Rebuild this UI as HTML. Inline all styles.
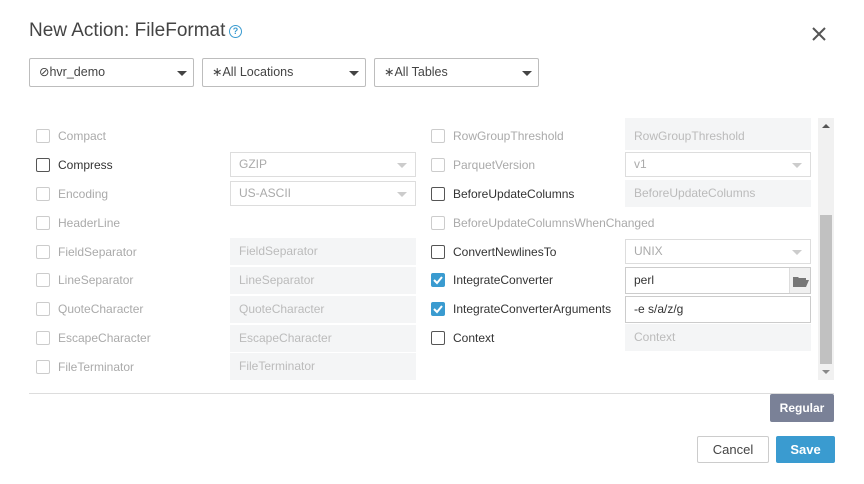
<!DOCTYPE html>
<html><head><meta charset="utf-8"><style>
*{box-sizing:border-box;margin:0;padding:0}
body{width:864px;height:484px;background:#fff;font-family:"Liberation Sans",sans-serif;position:relative;overflow:hidden;color:#333}
.a{position:absolute}
.title{left:29px;top:20px;font-size:19px;color:#444}
.help{left:229px;top:25px;width:13px;height:13px;border:1.5px solid #3a9bd0;border-radius:50%;color:#3a9bd0;font-size:9px;font-weight:bold;text-align:center;line-height:10px}
.dd{top:58px;height:29px;border:1px solid #bdbdbd;border-radius:2px;font-size:12.5px;line-height:27px;padding-left:9px;color:#444}
.dd:after{content:"";position:absolute;right:6px;top:12px;border-left:5px solid transparent;border-right:5px solid transparent;border-top:5px solid #444}
.cb{width:14px;height:14px;border:1px solid #ccc;border-radius:2px}
.cb.on{border-color:#555}
.cb.ck{background:#3a9bd0;border-color:#3a9bd0}
.lb{font-size:12px;color:#aaa}
.lb.on{color:#333}
.in{height:27px;background:#f4f5f6;font-size:12px;color:#bbb;padding-left:9px;line-height:27px}
.sel{height:25px;border:1px solid #ddd;font-size:12px;color:#aaa;padding-left:8px;line-height:23px}
.sel:after{content:"";position:absolute;right:8px;top:10px;border-left:5px solid transparent;border-right:5px solid transparent;border-top:5px solid #ccc}
.ti{height:27px;border:1px solid #ccc;font-size:12px;color:#333;padding-left:8px;line-height:25px;background:#fff}
.btn{font-size:13px;text-align:center;border-radius:2px}
</style></head><body>
<div class="a title">New Action: FileFormat</div>
<div class="a help">?</div>
<svg class="a" style="left:811px;top:26px" width="16" height="16"><path d="M2 2L14 14M14 2L2 14" stroke="#555" stroke-width="2"/></svg>
<div class="a dd" style="left:29px;width:165px">⊘hvr_demo</div>
<div class="a dd" style="left:202px;width:164px">∗All Locations</div>
<div class="a dd" style="left:374px;width:165px">∗All Tables</div>

<div class="a cb" style="left:36px;top:129px"></div><div class="a lb" style="left:58px;top:129px">Compact</div>
<div class="a cb on" style="left:36px;top:158px"></div><div class="a lb on" style="left:58px;top:158px">Compress</div>
<div class="a sel" style="left:230px;top:152px;width:186px">GZIP</div>
<div class="a cb" style="left:36px;top:187px"></div><div class="a lb" style="left:58px;top:187px">Encoding</div>
<div class="a sel" style="left:230px;top:181px;width:186px">US-ASCII</div>
<div class="a cb" style="left:36px;top:216px"></div><div class="a lb" style="left:58px;top:216px">HeaderLine</div>
<div class="a cb" style="left:36px;top:245px"></div><div class="a lb" style="left:58px;top:245px">FieldSeparator</div>
<div class="a in" style="left:230px;top:238px;width:186px">FieldSeparator</div>
<div class="a cb" style="left:36px;top:273px"></div><div class="a lb" style="left:58px;top:273px">LineSeparator</div>
<div class="a in" style="left:230px;top:267px;width:186px">LineSeparator</div>
<div class="a cb" style="left:36px;top:302px"></div><div class="a lb" style="left:58px;top:302px">QuoteCharacter</div>
<div class="a in" style="left:230px;top:296px;width:186px">QuoteCharacter</div>
<div class="a cb" style="left:36px;top:331px"></div><div class="a lb" style="left:58px;top:331px">EscapeCharacter</div>
<div class="a in" style="left:230px;top:325px;width:186px">EscapeCharacter</div>
<div class="a cb" style="left:36px;top:360px"></div><div class="a lb" style="left:58px;top:360px">FileTerminator</div>
<div class="a in" style="left:230px;top:353px;width:186px">FileTerminator</div>

<div class="a in" style="left:625px;top:118px;width:186px;height:5px"></div>
<div class="a cb" style="left:431px;top:129px"></div><div class="a lb" style="left:453px;top:129px">RowGroupThreshold</div>
<div class="a in" style="left:625px;top:123px;width:186px">RowGroupThreshold</div>
<div class="a cb" style="left:431px;top:158px"></div><div class="a lb" style="left:453px;top:158px">ParquetVersion</div>
<div class="a sel" style="left:625px;top:152px;width:186px">v1</div>
<div class="a cb on" style="left:431px;top:187px"></div><div class="a lb on" style="left:453px;top:187px">BeforeUpdateColumns</div>
<div class="a in" style="left:625px;top:180px;width:186px">BeforeUpdateColumns</div>
<div class="a cb" style="left:431px;top:216px"></div><div class="a lb" style="left:453px;top:216px">BeforeUpdateColumnsWhenChanged</div>
<div class="a cb on" style="left:431px;top:245px"></div><div class="a lb on" style="left:453px;top:245px">ConvertNewlinesTo</div>
<div class="a sel" style="left:625px;top:239px;width:186px">UNIX</div>
<div class="a cb ck" style="left:431px;top:273px"><svg width="14" height="14" style="position:absolute;left:-1px;top:-1px"><path d="M3 7L6 10L11 4" stroke="#fff" stroke-width="2" fill="none"/></svg></div><div class="a lb on" style="left:453px;top:273px">IntegrateConverter</div>
<div class="a ti" style="left:625px;top:267px;width:186px">perl</div>
<div class="a" style="left:789px;top:268px;width:21px;height:25px;background:#f0f0f0;border-left:1px solid #ddd"><svg width="21" height="25"><path d="M3 9h5l1 1h7v2H6l-3 7z M3 19l3-7h13l-3 7z" fill="#777"/></svg></div>
<div class="a cb ck" style="left:431px;top:302px"><svg width="14" height="14" style="position:absolute;left:-1px;top:-1px"><path d="M3 7L6 10L11 4" stroke="#fff" stroke-width="2" fill="none"/></svg></div><div class="a lb on" style="left:453px;top:302px">IntegrateConverterArguments</div>
<div class="a ti" style="left:625px;top:296px;width:186px">-e s/a/z/g</div>
<div class="a cb on" style="left:431px;top:331px"></div><div class="a lb on" style="left:453px;top:331px">Context</div>
<div class="a in" style="left:625px;top:324px;width:186px">Context</div>

<div class="a" style="left:818px;top:118px;width:16px;height:262px;background:#f1f1f1"></div>
<div class="a" style="left:820px;top:215px;width:12px;height:149px;background:#c1c1c1"></div>
<div class="a" style="left:822px;top:124px;border-left:4px solid transparent;border-right:4px solid transparent;border-bottom:4px solid #555"></div>
<div class="a" style="left:822px;top:370px;border-left:4px solid transparent;border-right:4px solid transparent;border-top:4px solid #888"></div>

<div class="a" style="left:29px;top:393px;width:805px;height:1px;background:#ddd"></div>
<div class="a btn" style="left:770px;top:394px;width:64px;height:28px;background:#7a8197;color:#fff;font-weight:bold;font-size:12px;line-height:28px">Regular</div>
<div class="a btn" style="left:697px;top:436px;width:72px;height:27px;border:1px solid #ccc;color:#444;line-height:25px">Cancel</div>
<div class="a btn" style="left:776px;top:436px;width:59px;height:27px;background:#3a9bd0;color:#fff;font-weight:bold;line-height:27px">Save</div>
</body></html>
